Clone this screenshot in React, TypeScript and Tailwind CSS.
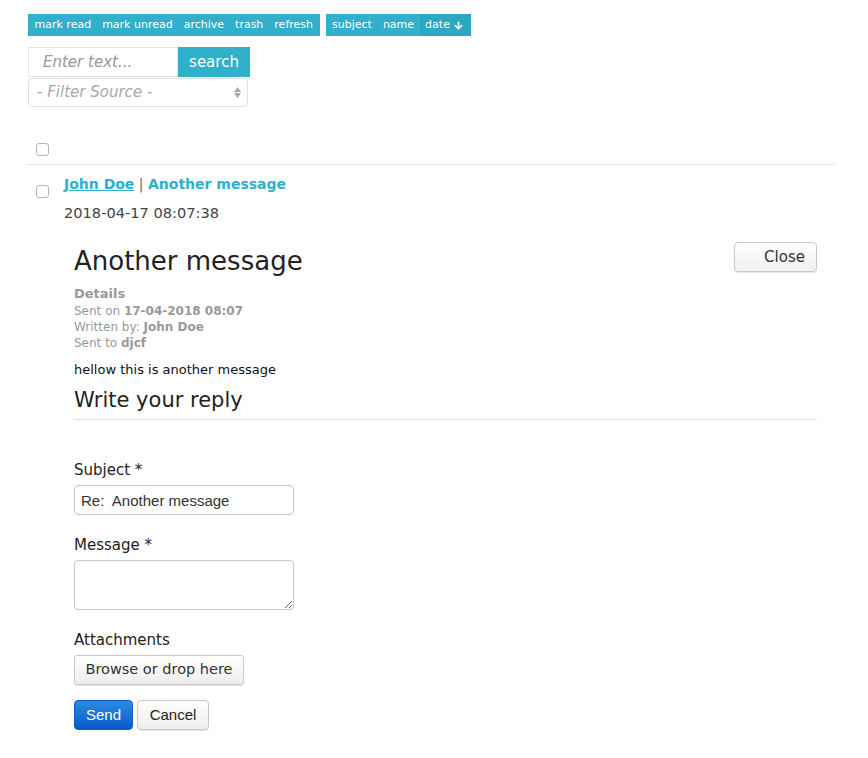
import { ArrowDown } from 'lucide-react';

const toolbarLeft = ['mark read', 'mark unread', 'archive', 'trash', 'refresh'];

const Checkbox = () => (
  <span className="inline-block w-[13px] h-[13px] rounded-[3px] border border-[#b5b5b5] bg-white" />
);

const App = () => {
  return (
    <div className="min-h-screen bg-white text-[#333] font-['DejaVu_Sans',Verdana,sans-serif]">
      <div className="pl-[28px] pr-[33px] pt-[14px]">
        {/* toolbar */}
        <div className="flex gap-[6px] h-[22px]">
          <div className="flex bg-[#31b0cc] px-[1px]">
            {toolbarLeft.map((t) => (
              <span key={t} className="px-[5.5px] leading-[22px] text-[11px] text-white">
                {t}
              </span>
            ))}
          </div>
          <div className="flex bg-[#31b0cc] pl-[1px]">
            <span className="px-[5.5px] leading-[22px] text-[11px] text-white">subject</span>
            <span className="px-[5.5px] leading-[22px] text-[11px] text-white">name</span>
            <span className="flex items-center gap-[3px] pl-[5.5px] pr-[7px] leading-[22px] text-[11px] text-white bg-[#2ba8c3]">
              date <ArrowDown size={11} strokeWidth={3.5} />
            </span>
          </div>
        </div>

        {/* search */}
        <div className="mt-[11px] flex">
          <input
            placeholder="Enter text..."
            className="w-[150px] h-[30px] border border-[#e6e6e6] px-[14px] text-[15px] italic placeholder-[#999] outline-none"
          />
          <button className="w-[72px] h-[30px] bg-[#31b0cc] text-white text-[15px]">search</button>
        </div>
        <div className="relative mt-[1px] w-[220px] h-[29px] rounded-[4px] border border-[#e0e0e0] flex items-center px-[8px]">
          <span className="text-[15px] italic text-[#a8a8a8]">- Filter Source -</span>
          <span className="absolute right-[6px] top-[8px] flex flex-col items-center text-[#999]">
            <svg width="7" height="5" viewBox="0 0 7 5"><path d="M3.5 0L7 5H0z" fill="#aaa" /></svg>
            <svg width="7" height="5" viewBox="0 0 7 5" className="mt-[1px]"><path d="M0 0h7L3.5 5z" fill="#aaa" /></svg>
          </span>
        </div>

        {/* list header */}
        <div className="mt-[33px] pl-[8px] h-[19px] flex items-center">
          <Checkbox />
        </div>
        <div className="mt-[5px] border-t border-[#e5e5e5]" />

        {/* message row */}
        <div className="flex mt-[9px]">
          <div className="w-[36px] pl-[8px] pt-[7px]">
            <Checkbox />
          </div>
          <div className="flex-1">
            <div className="text-[14px] font-bold leading-[20px]">
              <a className="text-[#2fb0cc] underline">John Doe</a>
              <span className="text-[#666] font-normal"> | </span>
              <a className="text-[#2fb0cc]">Another message</a>
            </div>
            <div className="mt-[9px] text-[14.6px] text-[#444] leading-[20px]">2018-04-17 08:07:38</div>

            {/* detail */}
            <div className="mt-[14px] pl-[10px] pr-[18px]">
              <div className="flex justify-between items-start">
                <h2 className="mt-[8px] text-[26px] leading-[32px] text-[#222]">Another message</h2>
                <button className="mt-[5px] w-[83px] h-[30px] rounded-[4px] border border-[#c8c8c8] bg-gradient-to-b from-white to-[#f0f0f0] shadow-[0_1px_1px_rgba(0,0,0,0.1)] text-[15px] text-[#333] pl-[18px]">
                  Close
                </button>
              </div>
              <div className="mt-[8px] text-[12px] leading-[16px] text-[#999]">
                <div className="text-[13px] font-bold leading-[18px]">Details</div>
                <div>Sent on <b>17-04-2018 08:07</b></div>
                <div>Written by: <b>John Doe</b></div>
                <div>Sent to <b>djcf</b></div>
              </div>
              <p className="mt-[10px] text-[13px] leading-[18px] text-[#111]">hellow this is another message</p>
              <h3 className="mt-[8px] text-[21px] leading-[26px] text-[#222]">Write your reply</h3>
              <div className="mt-[6px] border-t border-[#e0e0e0]" />

              <form className="mt-[40px]">
                <label className="block text-[15px] leading-[20px] text-[#222]">Subject *</label>
                <input
                  defaultValue="Re:  Another message"
                  className="mt-[5px] block w-[220px] h-[30px] rounded-[4px] border border-[#c8c8c8] px-[6px] text-[15px] text-[#333] font-['Liberation_Sans',Arial,sans-serif] outline-none"
                />
                <label className="mt-[20px] block text-[15px] leading-[20px] text-[#222]">Message *</label>
                <textarea className="mt-[5px] block w-[220px] h-[50px] rounded-[4px] border border-[#c8c8c8] outline-none" />
                <label className="mt-[20px] block text-[15px] leading-[20px] text-[#222]">Attachments</label>
                <button
                  type="button"
                  className="mt-[5px] block w-[170px] h-[30px] rounded-[3px] border border-[#c8c8c8] bg-gradient-to-b from-white to-[#ededed] shadow-[0_1px_1px_rgba(0,0,0,0.1)] text-[14.5px] text-[#333]"
                >
                  Browse or drop here
                </button>
                <div className="mt-[15px] flex gap-[4px] font-['Liberation_Sans',Arial,sans-serif]">
                  <button
                    type="button"
                    className="w-[59px] h-[30px] rounded-[4px] border border-[#0b5fc0] bg-gradient-to-b from-[#2a8be0] to-[#0a5ac8] text-white text-[15px]"
                  >
                    Send
                  </button>
                  <button
                    type="button"
                    className="w-[72px] h-[30px] rounded-[4px] border border-[#c8c8c8] bg-gradient-to-b from-white to-[#ededed] shadow-[0_1px_1px_rgba(0,0,0,0.1)] text-[15px] text-[#222]"
                  >
                    Cancel
                  </button>
                </div>
              </form>
            </div>
          </div>
        </div>
      </div>
    </div>
  );
};

export default App;
